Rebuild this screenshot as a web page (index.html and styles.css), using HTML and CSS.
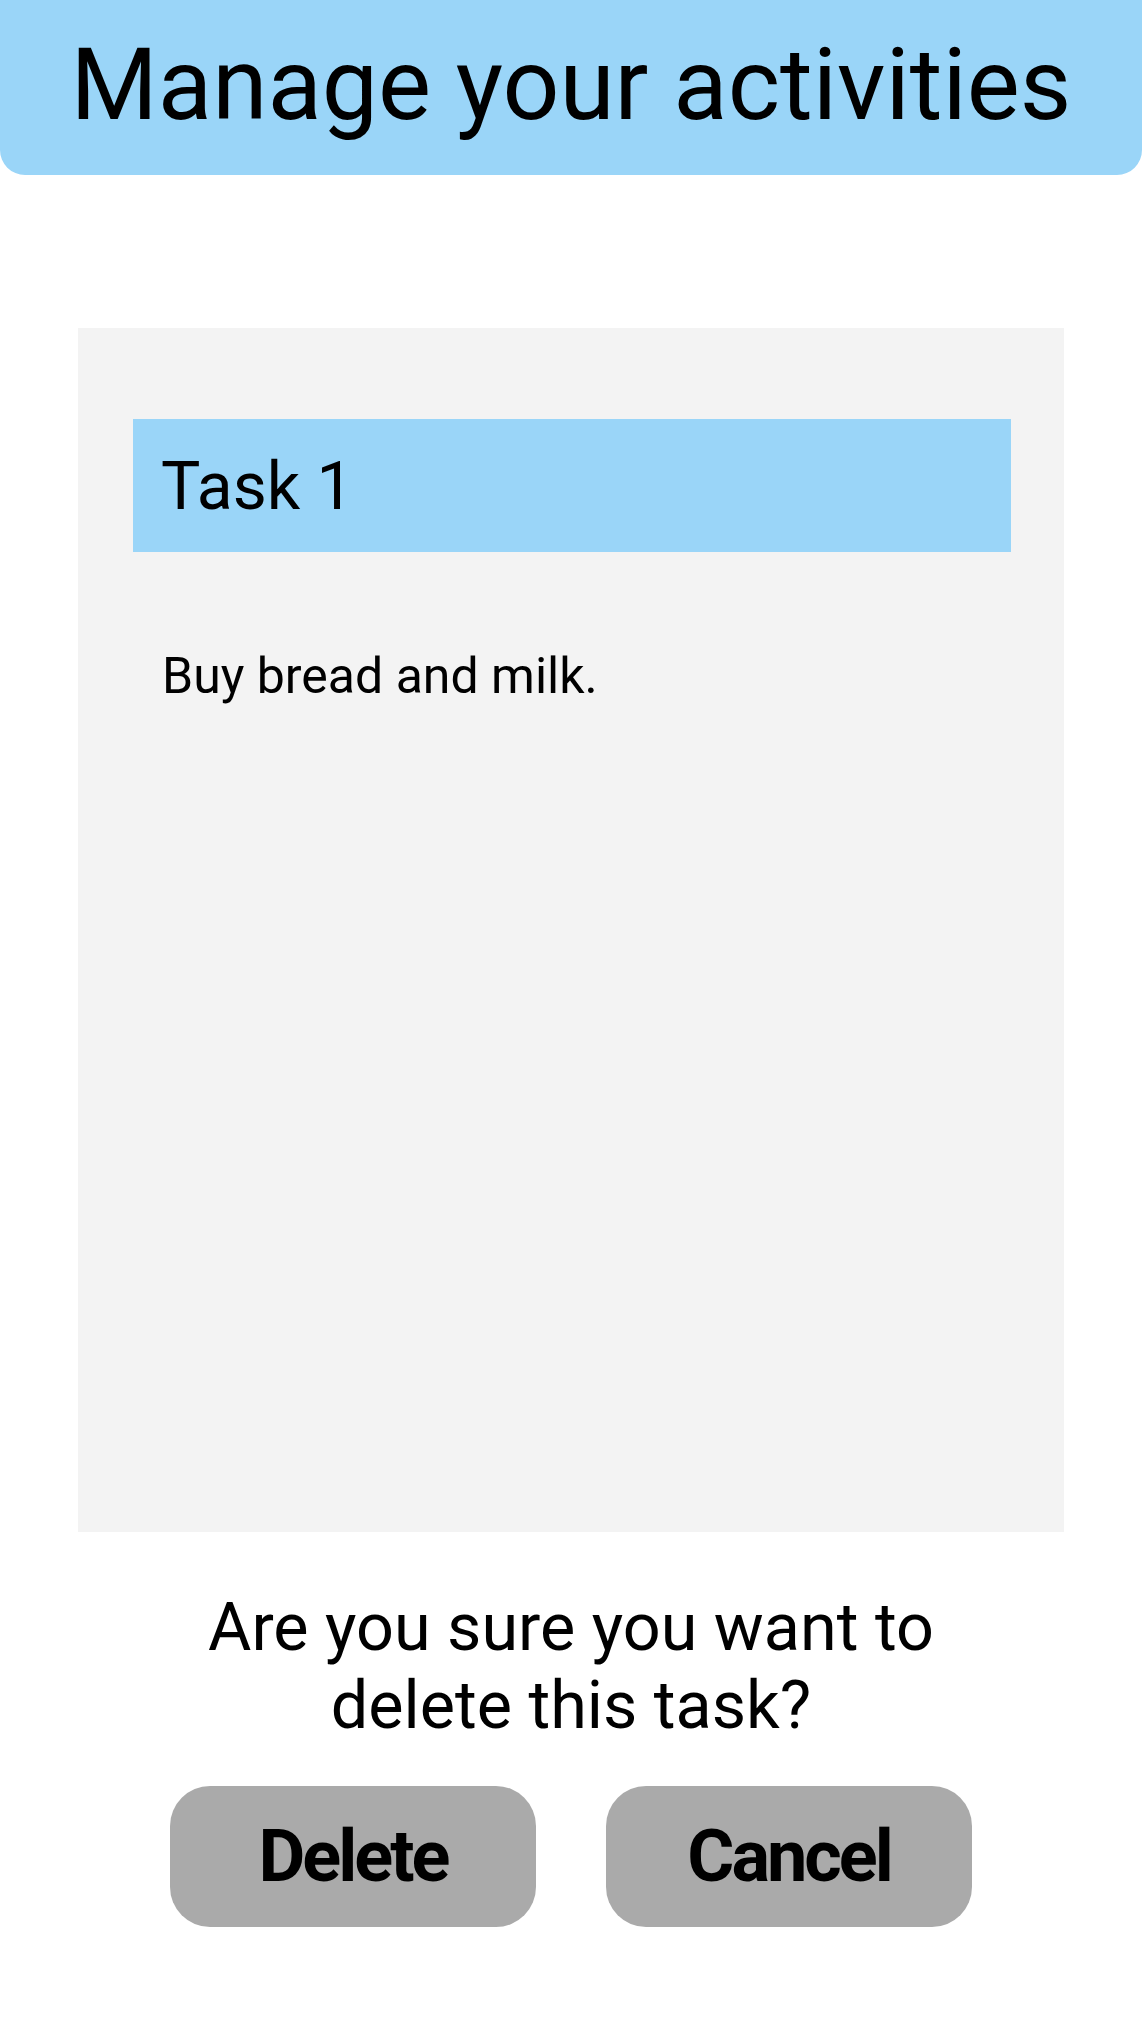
FILE: index.html
```html
<!DOCTYPE html>
<html lang="en">
<head>
<meta charset="utf-8">
<title>Manage your activities</title>
<link rel="stylesheet" href="styles.css">
</head>
<body>
<header class="app-header">
  <h1 class="app-title">Manage your activities</h1>
</header>
<main class="content">
  <section class="task-card">
    <div class="task-head">
      <h2 class="task-title">Task 1</h2>
    </div>
    <p class="task-desc">Buy bread and milk.</p>
  </section>
  <p class="confirm-text">Are you sure you want to delete this task?</p>
  <div class="actions">
    <button class="btn">Delete</button>
    <button class="btn">Cancel</button>
  </div>
</main>
</body>
</html>
```
FILE: styles.css
```css
* { box-sizing: border-box; }
html, body { margin: 0; padding: 0; background: #ffffff; }
body {
  font-family: Roboto, "Noto Sans", "Liberation Sans", sans-serif;
  color: #000000;
  width: 1142px;
  min-height: 2031px;
}
.app-header {
  height: 175px;
  background: #9ad5f8;
  border-radius: 0 0 25px 25px;
  padding-top: 26px;
  text-align: center;
}
.app-title {
  margin: 0;
  font-size: 100px;
  font-weight: 400;
  line-height: normal;
}
.content {
  display: flex;
  flex-direction: column;
  align-items: center;
}
.task-card {
  margin-top: 153px;
  width: 986px;
  height: 1204px;
  background: #f3f3f3;
  padding: 91px 53px 0 55px;
}
.task-head {
  height: 133px;
  background: #9ad5f8;
  padding: 29px 0 0 28px;
}
.task-title {
  margin: 0;
  font-size: 66px;
  font-weight: 400;
  line-height: normal;
}
.task-desc {
  margin: 95px 0 0 29px;
  font-size: 50px;
  line-height: normal;
}
.confirm-text {
  margin: 56px 0 0;
  width: 800px;
  text-align: center;
  font-size: 66.5px;
  line-height: normal;
}
.actions {
  margin-top: 42px;
  display: flex;
  gap: 70px;
}
.btn {
  width: 366px;
  height: 141px;
  border: none;
  border-radius: 40px;
  background: #aaaaaa;
  color: #000000;
  font-family: Roboto, "Noto Sans", "Liberation Sans", sans-serif;
  font-size: 72px;
  font-weight: 700;
  letter-spacing: -3px;
  padding: 0;
}
```
